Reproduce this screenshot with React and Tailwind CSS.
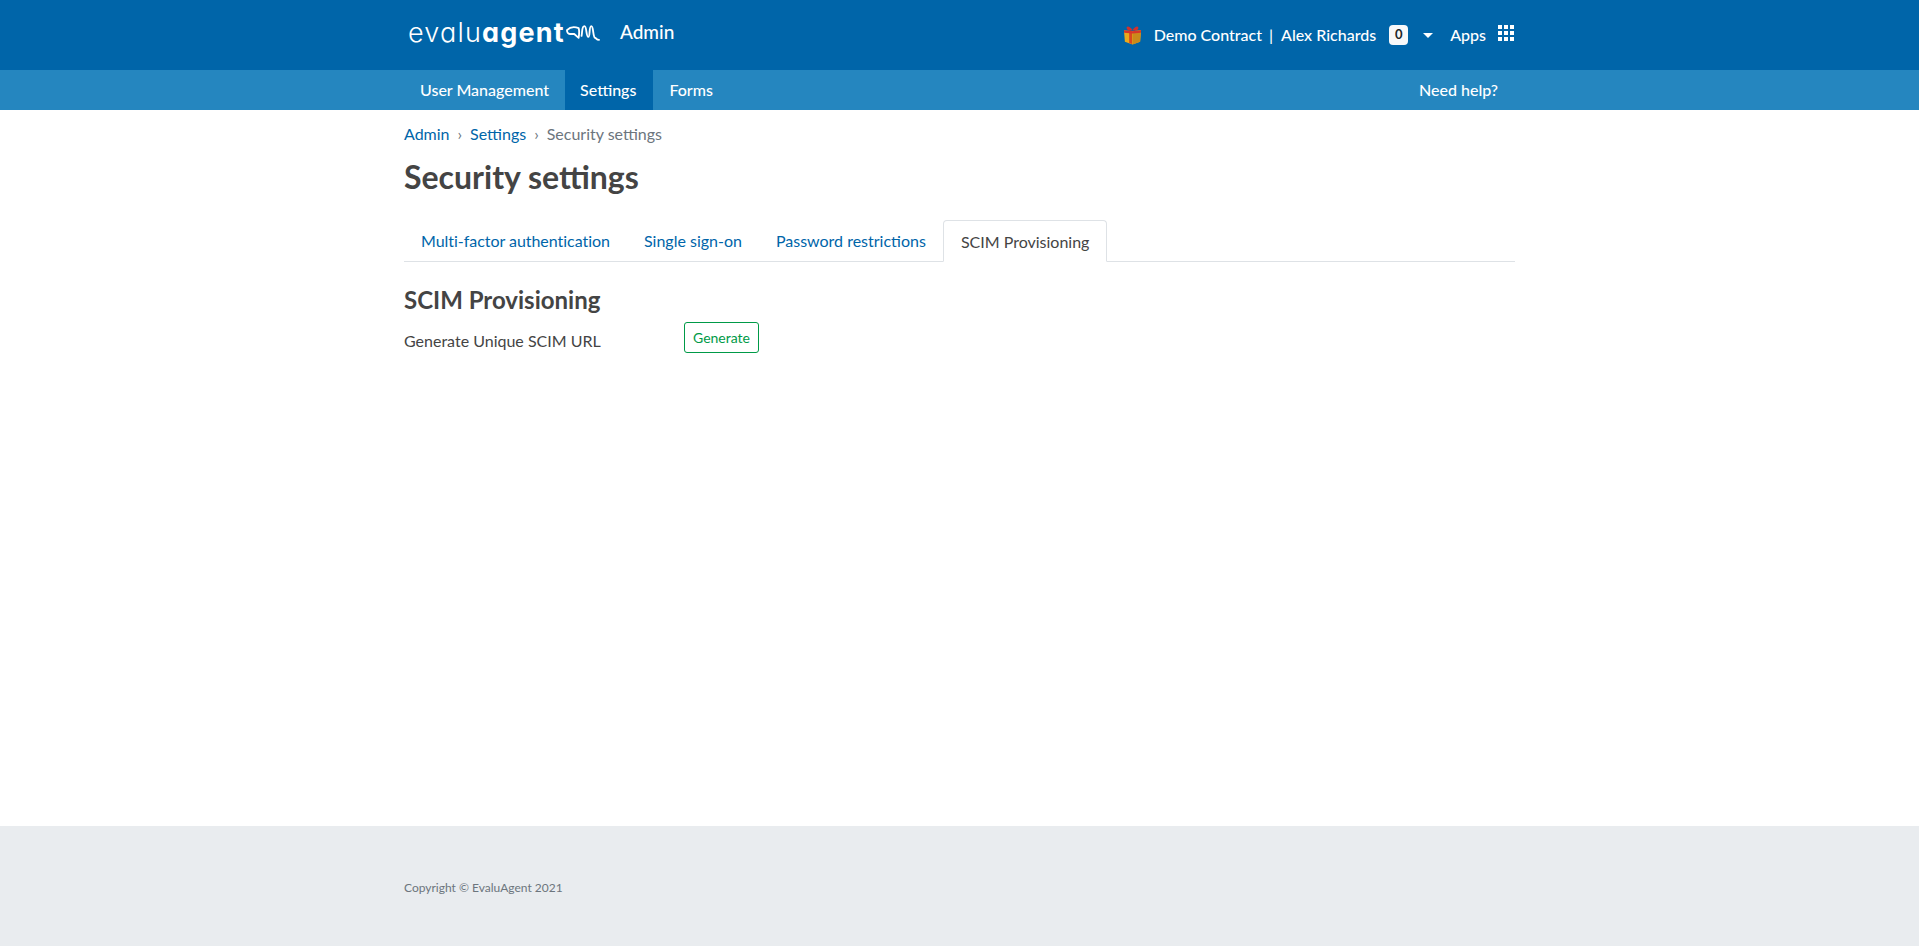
import React from "react";

const GiftIcon = () => (
  <svg width="19" height="20" viewBox="0 0 20 20">
    <path d="M10 5 C7 0 3 0 4 3.500 C5 6 8 5.500 10 5 C12 5.500 15 6 16 3.500 C17 0 13 0 10 5Z" fill="#d0312d" />
    <path d="M1 5 L10 6 L19 5 L18 17 L10 20 L2 17Z" fill="#eba91c" />
    <path d="M10 6 L19 5 L18 17 L10 20Z" fill="#c98a1b" />
    <path d="M6.500 5.500 L9.500 6 L9.500 19.500 L6.500 18.500Z" fill="#d9481f" />
    <path d="M1 5 L10 6 L19 5 L18.800 7.500 L10 8.500 L1.200 7.500Z" fill="#d8352a" />
  </svg>
);

const AppsIcon = () => (
  <svg width="16" height="16" viewBox="0 0 16 16" fill="#fff">
    {[0, 6, 12].map((y) =>
      [0, 6, 12].map((x) => <rect key={`${x}-${y}`} x={x} y={y} width="4" height="4" />)
    )}
  </svg>
);

const Logo = () => (
  <div className="flex items-center text-white font-['Inter',sans-serif] [font-feature-settings:'cv11'] text-[27px] leading-none tracking-[1.2px]">
    <span className="font-light">evalu</span>
    <span className="font-bold">agent</span>
    <svg width="34" height="20" viewBox="0 0 35 20" fill="none" stroke="#fff" strokeWidth="1.900" strokeLinecap="round" strokeLinejoin="round" className="ml-[1px] mt-[1px]">
      <path d="M1 7 C4 4 9 3.500 13 5 C14 8 13.500 12 13 15 L8.500 11 L4 11 C2 11 1 9 1 7Z" />
      <path d="M16 13 C17 9 16 3 19 3 C21.500 3 20.500 14 23 14 C25 14 23.500 3 26 3 C28.500 3 27.500 14 30 15 C32 16 31 17 34 17" />
    </svg>
  </div>
);

const tabs = [
  { label: "Multi-factor authentication", cls: "tracking-[-0.035px]" },
  { label: "Single sign-on", cls: "" },
  { label: "Password restrictions", cls: "" },
];

export default function App() {
  return (
    <div className="flex flex-col min-h-[946px] bg-white font-['Lato',sans-serif] text-[#444444] text-base">
      <header className="h-[70px] bg-[#0065a9]">
        <div className="w-[1111px] ml-[404px] flex justify-between">
          <div className="flex items-center h-[65px] pl-[4px]">
            <Logo />
            <span className="ml-[20px] text-white text-[19px] font-medium">Admin</span>
          </div>
          <div className="flex items-center h-[70px] text-white font-medium pr-[1px]">
            <GiftIcon />
            <span className="ml-[12px]">Demo Contract</span>
            <span className="ml-[7px] mr-2">|</span>
            <span>Alex Richards</span>
            <span className="ml-[13px] w-[19px] h-[20px] rounded bg-[#f8f9fa] text-[#212529] text-[13px] font-bold flex items-center justify-center">0</span>
            <span className="ml-[15px] w-0 h-0 border-x-[5px] border-x-transparent border-t-[5px] border-t-white" />
            <span className="ml-[17px]">Apps</span>
            <span className="ml-3 -mt-1"><AppsIcon /></span>
          </div>
        </div>
      </header>

      <nav className="h-[40px] bg-[#2586bf]">
        <div className="w-[1111px] ml-[404px] flex justify-between text-white font-medium">
          <div className="flex">
            <a className="h-[40px] px-[16px] flex items-center">User Management</a>
            <a className="h-[40px] pl-[15px] pr-[17px] flex items-center bg-[#0065a9]">Settings</a>
            <a className="h-[40px] px-[16px] flex items-center">Forms</a>
          </div>
          <a className="h-[40px] pr-[17px] flex items-center">Need help?</a>
        </div>
      </nav>

      <main className="flex-1 w-[1111px] ml-[404px]">
        <div className="flex items-center h-[24px] mt-[12px]">
          <a className="text-[#0065a9]">Admin</a>
          <span className="mx-[8px] text-[#6c757d]">›</span>
          <a className="text-[#0065a9]">Settings</a>
          <span className="mx-[8px] text-[#6c757d]">›</span>
          <span className="text-[#6c757d]">Security settings</span>
        </div>
        <h1 className="mt-[12px] text-[32px] leading-[38px] font-bold">Security settings</h1>

        <div className="flex mt-[24px] h-[42px] border-b border-[#dee2e6]">
          {tabs.map((t) => (
            <a key={t.label} className={`h-[41px] px-[17px] pt-[1px] flex items-center text-[#0065a9] ${t.cls}`}>
              {t.label}
            </a>
          ))}
          <a className="h-[42px] px-[17px] pt-[1px] flex items-center bg-white border border-b-white border-[#dee2e6] rounded-t">
            SCIM Provisioning
          </a>
        </div>

        <h2 className="mt-[23px] text-[24px] leading-[29px] font-bold">SCIM Provisioning</h2>
        <div className="flex items-start mt-[8px]">
          <label className="w-[280px] pt-[7px] leading-[24px]">Generate Unique SCIM URL</label>
          <button className="h-[31px] w-[75px] rounded-[3px] border border-[#009a47] bg-white text-[#009a47] text-[14px]">
            Generate
          </button>
        </div>
      </main>

      <footer className="h-[120px] bg-[#e9ecef]">
        <div className="w-[1111px] ml-[404px] pt-[53px] text-[12px] leading-[18px] text-[#6c757d]">
          Copyright © EvaluAgent 2021
        </div>
      </footer>
    </div>
  );
}
